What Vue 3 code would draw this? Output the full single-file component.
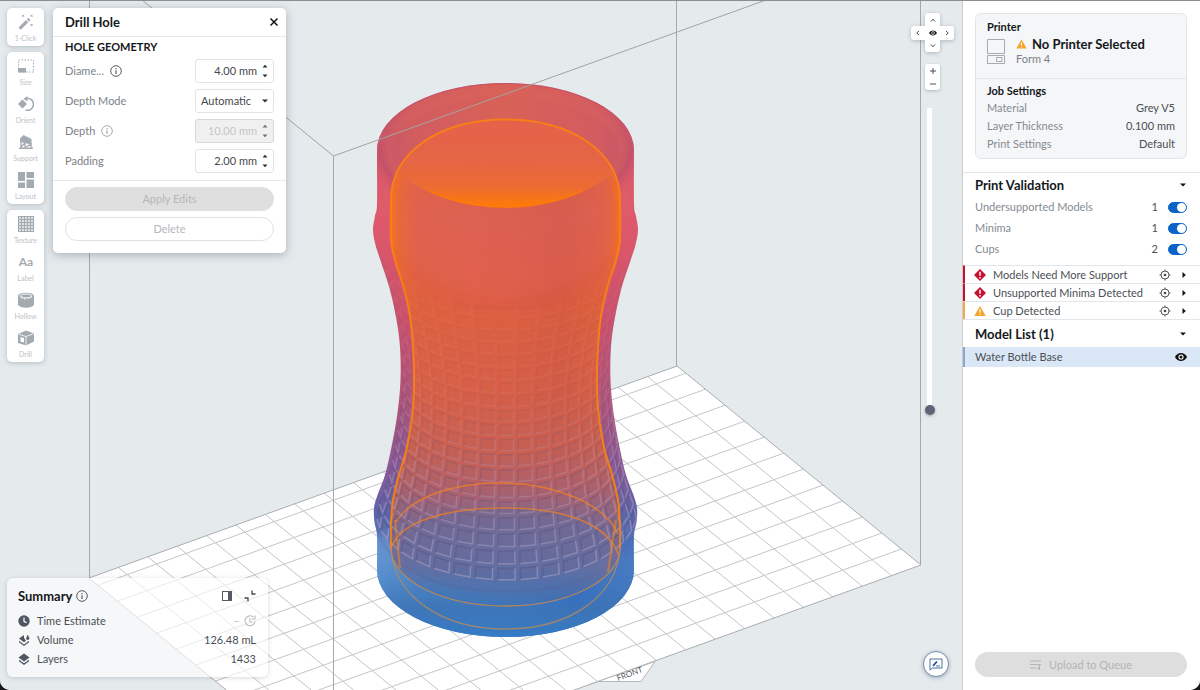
<script setup>
import { ref } from 'vue'

const toolGroups = [
  [{ icon: 'wand', label: '1-Click' }],
  [
    { icon: 'size', label: 'Size' },
    { icon: 'orient', label: 'Orient' },
    { icon: 'support', label: 'Support' },
    { icon: 'layout', label: 'Layout' },
  ],
  [
    { icon: 'texture', label: 'Texture' },
    { icon: 'label', label: 'Label' },
    { icon: 'hollow', label: 'Hollow' },
    { icon: 'drill', label: 'Drill' },
  ],
]
const gridStops = [0, 3, 6, 9, 12, 15]

const fields = ref([
  { id: 'diameter', label: 'Diame...', info: true, value: '4.00 mm' },
  { id: 'mode', label: 'Depth Mode', select: true },
  { id: 'depth', label: 'Depth', info: true, value: '10.00 mm', disabled: true },
  { id: 'padding', label: 'Padding', value: '2.00 mm' },
])
const job = [
  ['Material', 'Grey V5'],
  ['Layer Thickness', '0.100 mm'],
  ['Print Settings', 'Default'],
]
const checks = ref([
  { id: 'models', label: 'Undersupported Models', count: 1, on: true },
  { id: 'minima', label: 'Minima', count: 1, on: true },
  { id: 'cups', label: 'Cups', count: 2, on: true },
])
const alerts = [
  { text: 'Models Need More Support', level: 'error' },
  { text: 'Unsupported Minima Detected', level: 'error' },
  { text: 'Cup Detected', level: 'warn' },
]
const height = ref(0)

/* Build platform: an orthographic grid, 20 cells deep and 12 and a half wide. */
const floorLines = []
for (let i = 1; i < 20; i++) {
  const x = 89 + 29.4 * i
  const y = 578 - 10.6 * i
  floorLines.push({ x1: x, y1: y, x2: x + 244, y2: y + 199 })
}
for (let k = 1; k <= 12; k++) {
  const x = 921 - 19.6 * k
  const y = 565 - 15.98 * k
  floorLines.push({ x1: x, y1: y, x2: x - 588, y2: y + 212 })
}

/* Bottle profile as [height on the axis, radius]. */
const CX = 505.5
const TILT = 0.52
const outer = [
  [150, 128.5], [204, 128.5], [216, 130.5], [230, 132.5], [245, 130], [262, 124.5], [290, 115.5], [320, 109],
  [347, 105.5], [380, 105], [413, 108], [447, 114], [475, 120.5], [495, 128], [508, 131.5],
  [522, 131], [536, 128.5], [570, 128.5],
]
const inner = [
  [200, 114.5], [240, 114.5], [262, 110], [285, 102.5], [313, 96], [347, 92.5], [380, 91.5],
  [413, 93], [447, 98.5], [480, 108], [503, 113], [527, 114.5], [548, 114.5],
]
function radius(h) {
  for (let i = 1; i < outer.length; i++) {
    if (h <= outer[i][0]) {
      const [a, ra] = outer[i - 1]
      const [b, rb] = outer[i]
      return ra + ((rb - ra) * (h - a)) / (b - a)
    }
  }
  return 128.5
}
function curve(points) {
  let d = ''
  for (let i = 0; i < points.length - 1; i++) {
    const p0 = points[Math.max(i - 1, 0)]
    const p1 = points[i]
    const p2 = points[i + 1]
    const p3 = points[Math.min(i + 2, points.length - 1)]
    d += `C${p1[0] + (p2[0] - p0[0]) / 6},${p1[1] + (p2[1] - p0[1]) / 6} ${p2[0] - (p3[0] - p1[0]) / 6},${p2[1] - (p3[1] - p1[1]) / 6} ${p2[0]},${p2[1]}`
  }
  return d
}
const side = (profile, sign) => profile.map(([h, r]) => [CX + sign * r, h])
const outerPath =
  `M377,150A128.5,67 0 0 1 634,150` + curve(side(outer, 1)) +
  `A128.5,67 0 0 1 377,570` + curve(side(outer, -1).reverse()) + 'Z'
const innerTop = `M391,200C391,152 440,119.5 505.5,119.5S620,152 620,200` + curve(side(inner, 1))
const innerPath = innerTop + `A114.5,58 0 0 1 391,548` + curve(side(inner, -1).reverse()) + 'Z'
const innerEdge = innerTop + 'M391,548' + curve(side(inner, -1).reverse())

/* Embossed tiles wrapped round the front of the bottle. */
const tiles = []
const STEP = Math.PI / 18
const at = (h, a) => {
  const r = radius(h)
  return [CX + 1 + (r - 1) * Math.sin(a), h + r * TILT * Math.cos(a)]
}
const fmt = (p) => p.map((v) => v.toFixed(1)).join(',')
for (let row = 0; row < 19; row++) {
  const h = 238 + row * 14.5
  for (let col = -8; col <= 8; col++) {
    const a = col * STEP
    const q = [
      at(h + 2, a - STEP * 0.38), at(h + 2, a + STEP * 0.38),
      at(h + 12.5, a + STEP * 0.38), at(h + 12.5, a - STEP * 0.38),
    ]
    const strength = row < 9 ? 0.1 + row * 0.015 : 0.23 + (row - 8) * 0.055
    tiles.push({
      body: `M${q.map(fmt).join('L')}Z`,
      light: `M${fmt(q[1])}L${fmt(q[2])}L${fmt(q[3])}`,
      dark: `M${fmt(q[3])}L${fmt(q[0])}L${fmt(q[1])}`,
      o: Math.min(strength, 0.85),
    })
  }
}
</script>

<template>
  <div class="app">
    <main class="stage">
      <svg class="scene" viewBox="0 0 962 690" preserveAspectRatio="xMidYMid slice" aria-hidden="true">
        <defs>
          <linearGradient id="shell" gradientUnits="userSpaceOnUse" x1="0" y1="83" x2="0" y2="637">
            <stop offset="0" stop-color="#cf5a62" />
            <stop offset=".24" stop-color="#de596b" />
            <stop offset=".42" stop-color="#d0516a" />
            <stop offset=".58" stop-color="#b25379" />
            <stop offset=".7" stop-color="#8a5a98" />
            <stop offset=".78" stop-color="#5a66ac" />
            <stop offset=".86" stop-color="#5e8bcb" />
            <stop offset=".95" stop-color="#4189d0" />
            <stop offset="1" stop-color="#4a86cf" />
          </linearGradient>
          <linearGradient id="shade" gradientUnits="userSpaceOnUse" x1="377" y1="0" x2="634" y2="0">
            <stop offset="0" stop-color="#7fc0ee" stop-opacity=".3" />
            <stop offset=".3" stop-color="#3d6cb0" stop-opacity="0" />
            <stop offset=".75" stop-color="#1f4fa6" stop-opacity=".45" />
            <stop offset="1" stop-color="#2457b0" stop-opacity=".35" />
          </linearGradient>
          <linearGradient id="core" gradientUnits="userSpaceOnUse" x1="0" y1="119" x2="0" y2="606">
            <stop offset="0" stop-color="#e0604d" />
            <stop offset=".2" stop-color="#dc6053" />
            <stop offset=".36" stop-color="#e1603f" />
            <stop offset=".55" stop-color="#da5f47" />
            <stop offset=".68" stop-color="#cb6053" />
            <stop offset=".76" stop-color="#b3616a" />
            <stop offset=".83" stop-color="#81698e" />
            <stop offset=".92" stop-color="#6b6f9f" />
            <stop offset="1" stop-color="#3f6daa" stop-opacity=".5" />
          </linearGradient>
          <linearGradient id="coreSide" gradientUnits="userSpaceOnUse" x1="391" y1="0" x2="620" y2="0">
            <stop offset="0" stop-color="#ff7a10" stop-opacity=".5" />
            <stop offset=".12" stop-color="#f07030" stop-opacity=".15" />
            <stop offset=".4" stop-color="#ef7040" stop-opacity=".08" />
            <stop offset=".75" stop-color="#b84a35" stop-opacity=".12" />
            <stop offset=".93" stop-color="#f07020" stop-opacity=".15" />
            <stop offset="1" stop-color="#ff7a10" stop-opacity=".5" />
          </linearGradient>
          <linearGradient id="coreFade" gradientUnits="userSpaceOnUse" x1="0" y1="119" x2="0" y2="500">
            <stop offset=".7" stop-color="#fff" />
            <stop offset="1" stop-color="#000" />
          </linearGradient>
          <mask id="coreMask" maskUnits="userSpaceOnUse" x="370" y="100" width="280" height="420">
            <rect x="370" y="100" width="280" height="420" fill="url(#coreFade)" />
          </mask>
          <linearGradient id="lens" gradientUnits="userSpaceOnUse" x1="0" y1="119" x2="0" y2="208">
            <stop offset="0" stop-color="#e4624a" />
            <stop offset=".45" stop-color="#e56546" />
            <stop offset=".75" stop-color="#ec6b34" />
            <stop offset="1" stop-color="#ff7b04" />
          </linearGradient>
          <linearGradient id="rim" gradientUnits="userSpaceOnUse" x1="377" y1="0" x2="634" y2="0">
            <stop offset="0" stop-color="#c5546a" />
            <stop offset=".14" stop-color="#d25d60" />
            <stop offset=".5" stop-color="#d86157" />
            <stop offset=".85" stop-color="#d35c60" />
            <stop offset="1" stop-color="#c5546a" />
          </linearGradient>
          <linearGradient id="base" gradientUnits="userSpaceOnUse" x1="0" y1="530" x2="0" y2="637">
            <stop offset="0" stop-color="#4b83c8" stop-opacity="0" />
            <stop offset=".45" stop-color="#4679bc" stop-opacity=".35" />
            <stop offset=".72" stop-color="#3e73b3" stop-opacity=".85" />
            <stop offset="1" stop-color="#357cc6" />
          </linearGradient>
          <filter id="soft" x="-10%" y="-10%" width="120%" height="120%"><feGaussianBlur stdDeviation="3" /></filter>
          <filter id="haze" x="-10%" y="-10%" width="120%" height="120%"><feGaussianBlur stdDeviation="8" /></filter>
          <clipPath id="shellClip"><path :d="outerPath" /></clipPath>
          <clipPath id="coreClip"><path :d="innerPath" /></clipPath>
        </defs>

        <path d="M89,578L677,366L921,565L333,777Z" fill="#fff" />
        <line v-for="(l, i) in floorLines" :key="i" v-bind="l" stroke="#c3c5c7" />
        <path d="M89,578L677,366L921,565L333,777Z" fill="none" stroke="#a9adb0" />
        <path d="M588,685L655,661.500L641,681.500H597" fill="#fff" stroke="#b5b8bb" />
        <text x="618" y="681" transform="rotate(-20 618 681)" class="front">FRONT</text>
        <path d="M89.500,0V578M676.500,0V366M920.500,0V565" stroke="#a4a9ac" fill="none" />

        <path :d="outerPath" fill="url(#shell)" />
        <g clip-path="url(#shellClip)">
          <rect x="370" y="536" width="270" height="104" fill="url(#shade)" filter="url(#soft)" />
          <path d="M380,150A125.500,64 0 0 0 631,150V215H380Z" fill="#e0606a" opacity=".6" filter="url(#soft)" />
          <ellipse cx="505.500" cy="150" rx="127" ry="66" fill="url(#rim)" />
          <ellipse cx="505.500" cy="150" rx="117" ry="58" fill="none" stroke="#dd6860" stroke-width="6" opacity=".45" filter="url(#soft)" />
          <path d="M377,150A128.500,67 0 0 0 634,150" fill="none" stroke="#bb4c70" stroke-width="7" opacity=".5" filter="url(#soft)" />
          <path d="M377,150A128.500,67 0 0 1 634,150" fill="none" stroke="#b94a72" stroke-width="2" opacity=".5" />
        </g>

        <path :d="innerPath" fill="url(#core)" />
        <g clip-path="url(#coreClip)">
          <path d="M391,205C420,200 450,219 505,220S590,200 620,195V270Q505,345 391,270Z" fill="#dc6158" opacity=".55" filter="url(#haze)" />
          <path d="M391,255Q505,355 620,255" fill="none" stroke="#d85842" stroke-width="12" opacity=".4" filter="url(#soft)" />
          <rect x="390" y="119" width="232" height="381" fill="url(#coreSide)" mask="url(#coreMask)" />
          <path d="M391,520V200C391,152 440,119.500 505.500,119.500S620,152 620,200V520" fill="none" stroke="#ff7a08" stroke-width="6" opacity=".45" filter="url(#soft)" />
        </g>

        <g clip-path="url(#shellClip)">
          <path d="M374,538Q390,572 505,600T637,538V640H374Z" fill="url(#base)" filter="url(#soft)" />
          <ellipse cx="505" cy="551" rx="104" ry="44" fill="#4f70ad" opacity=".28" />
          <g v-for="(t, i) in tiles" :key="i" :opacity="t.o" fill="none">
            <path :d="t.body" fill="#6a6488" fill-opacity=".18" />
            <path :d="t.dark" stroke="#574f80" stroke-width="1.800" stroke-opacity=".5" />
            <path :d="t.light" stroke="#b09fbe" stroke-width="1.500" stroke-opacity=".7" />
          </g>
          <path d="M374,516Q385,590 505,591T637,516" fill="none" stroke="#65588e" stroke-width="2" opacity=".2" />
        </g>

        <path d="M391,200C391,152 440,119.500 505.500,119.500S620,152 620,200C616,188 613,178 612,173C586,196 545,207.500 505.500,207.500S425,196 399,173C396,180 393,188 391,200Z" fill="url(#lens)" />
        <path d="M430,191C454,202 480,207 505.500,207S557,202 581,191" fill="none" stroke="#ff7b08" stroke-width="2" opacity=".6" />
        <ellipse cx="505" cy="162" rx="12" ry="5" fill="none" stroke="#d9603f" opacity=".3" />
        <path d="M467,159v8M472,159v8M477,160v8M527,159v8M532,159v8" stroke="#d9603f" opacity=".25" />
        <path :d="innerEdge" fill="none" stroke="#fb8310" stroke-width="2" opacity=".9" />
        <g fill="none" stroke="#ef8222" stroke-width="1.500" opacity=".75">
          <path d="M396,522C412,496 455,483 500,483C555,483 605,504 618,534" />
          <path d="M392,546C402,520 450,508 505,508S608,522 619,556" />
        </g>
        <path d="M391,548A114.500,58 0 0 0 620,548" fill="none" stroke="#d08a45" stroke-width="1.300" opacity=".8" />
        <path d="M391,548C394,597 442,629 505.500,629S617,597 620,548" fill="none" stroke="#b98a5b" stroke-width="1.300" opacity=".8" />
        <path d="M395,520L400,568M616,520L608,572" stroke="#ff8a10" stroke-width="2" opacity=".5" />

        <path d="M142,0L333.500,156L766,0" fill="none" stroke="#a6a39f" />
        <path d="M333.500,156V690" stroke="#a4a9ac" />
      </svg>

      <nav class="toolbar" aria-label="Tools">
        <div v-for="(group, g) in toolGroups" :key="g" class="tool-group">
          <button v-for="tool in group" :key="tool.label" type="button" class="tool">
            <svg viewBox="0 0 16 16" class="tool-icon" fill="currentColor">
              <g v-if="tool.icon === 'wand'">
                <path d="M.5,13.500 8,6l2.300,2.300L2.800,15.800Z" /><path d="M8.800,5.200 10.200,3.800l2.300,2.300L11.100,7.500Z" />
                <path d="M4 .8l2 2m0-2-2 2M12.500.8l2 2m0-2-2 2M12.500 10l2 2m0-2-2 2" stroke="currentColor" fill="none" />
              </g>
              <g v-else-if="tool.icon === 'size'">
                <rect x=".5" y="2" width="15" height="12" fill="none" stroke="currentColor" stroke-dasharray="1.500 1.500" />
                <rect y="10" width="8" height="4.500" />
              </g>
              <g v-else-if="tool.icon === 'orient'">
                <path d="M0,8 4.500,3.500 9,8 4.500,12.500Z" />
                <path d="M8,2.500A6,6 0 1 1 7.500,14" fill="none" stroke="currentColor" stroke-width="1.500" /><path d="M9.500 0v5.500L5.500 2.700Z" />
              </g>
              <g v-else-if="tool.icon === 'support'">
                <path d="M2,4.500 5.500,1 13.500,5V10.500L2,8Z" />
                <path d="M3,7V14M7,9V14M13,9V14M3,13l4-4M8,13l5-3" stroke="currentColor" stroke-width="1.300" /><path d="M1,13.500h14V15H1Z" />
              </g>
              <path v-else-if="tool.icon === 'layout'" d="M0,0h7v9H0ZM8.500,0H16v6H8.500ZM0,10.500h7V16H0ZM8.500,7.500H16V16H8.500Z" />
              <g v-else-if="tool.icon === 'texture'" stroke="currentColor" stroke-width="1.300">
                <path v-for="s in gridStops" :key="s" :d="`M${s + .5},0V16M0,${s + .5}H16`" />
              </g>
              <text v-else-if="tool.icon === 'label'" x="8" y="12" text-anchor="middle" class="aa">Aa</text>
              <g v-else-if="tool.icon === 'hollow'">
                <path d="M0,4C0,-.5 16,-.5 16,4V12C16,17 0,17 0,12Z" />
                <ellipse cx="8" cy="4" rx="6" ry="2" fill="none" stroke="#fff" stroke-width=".9" />
                <path d="M4 4v2.500M7 5v3M10.500 5v2M13 4v2" stroke="#fff" stroke-width=".7" />
              </g>
              <g v-else>
                <path d="M0,4 8,0.500 16,3.500V11.500L8,15.500 0,13Z" />
                <path d="M.5,4.200 8,6.500 15.500,3.800M8,6.500V15" stroke="#fff" fill="none" stroke-width=".8" />
                <path d="M2.500,7 6,8V12.500L2.500,11.500Z" fill="#fff" />
              </g>
            </svg>
            <span>{{ tool.label }}</span>
          </button>
        </div>
      </nav>

      <section class="drill">
        <header class="drill-head">
          <h2>Drill Hole</h2>
          <button type="button" class="plain" aria-label="Close">
            <svg viewBox="0 0 10 10" width="10" height="10"><path d="M1.500,1.500l7,7m0-7-7,7" stroke="#111" stroke-width="1.500" /></svg>
          </button>
        </header>
        <div class="drill-body">
          <h3>HOLE GEOMETRY</h3>
          <div v-for="f in fields" :key="f.id" class="field">
            <label :for="f.id">{{ f.label }}</label>
            <svg v-if="f.info" class="info" :class="{ dim: f.disabled }" viewBox="0 0 12 12"><circle cx="6" cy="6" r="5.300" fill="none" stroke="currentColor" /><path d="M6,5.200V9M6,3v1.200" stroke="currentColor" stroke-width="1.200" /></svg>
            <div class="control" :class="{ off: f.disabled }">
              <template v-if="f.select">
                <select :id="f.id"><option>Automatic</option></select>
                <svg class="caret" viewBox="0 0 6 4"><path d="M0,.5h6L3,3.500Z" /></svg>
              </template>
              <template v-else>
                <input :id="f.id" v-model="f.value" type="text" :disabled="f.disabled" />
                <span class="spin">
                  <button type="button" aria-label="Increase" :disabled="f.disabled"><svg viewBox="0 0 6 4"><path d="M.5,3.500h5L3,.8Z" /></svg></button>
                  <button type="button" aria-label="Decrease" :disabled="f.disabled"><svg viewBox="0 0 6 4"><path d="M.5,.5h5L3,3.200Z" /></svg></button>
                </span>
              </template>
            </div>
          </div>
        </div>
        <footer class="drill-foot">
          <button type="button" class="pill filled" disabled>Apply Edits</button>
          <button type="button" class="pill" disabled>Delete</button>
        </footer>
      </section>

      <section class="summary">
        <header>
          <h2>Summary</h2>
          <svg class="info" viewBox="0 0 12 12"><circle cx="6" cy="6" r="5.300" fill="none" stroke="currentColor" /><path d="M6,5.200V9M6,3v1.200" stroke="currentColor" stroke-width="1.200" /></svg>
          <button type="button" class="plain push" aria-label="Dock panel">
            <svg viewBox="0 0 10 10" width="10" height="10"><rect x=".5" y=".5" width="9" height="9" fill="none" stroke="#555b66" /><path d="M6,0h4v10H6Z" fill="#555b66" /></svg>
          </button>
          <button type="button" class="plain" aria-label="Collapse panel">
            <svg viewBox="0 0 12 12" width="12" height="12"><path d="M8,.5V4H11.500M.5,8H4V11.500" fill="none" stroke="#444a52" stroke-width="1.300" /></svg>
          </button>
        </header>
        <dl>
          <div>
            <dt><svg viewBox="0 0 12 12"><circle cx="6" cy="6" r="5.700" fill="#4f5660" /><path d="M6,2.500V6.300L8.500,7.800" fill="none" stroke="#fff" stroke-width="1.200" /></svg>Time Estimate</dt>
            <dd class="pending">–<svg viewBox="0 0 12 12"><path d="M9.500,2.200A5,5 0 1 0 11,6.500M6,3.200V6.500L8.200,7.500M11,.5V4H7.500" fill="none" stroke="#b9bdc0" stroke-width="1.100" /></svg></dd>
          </div>
          <div>
            <dt><svg viewBox="0 0 12 12"><path d="M6,1 1,4.500l5,3.700L8,6.700 6,4ZM8,4.500 9.800,.5 11.500,4.500A1.800,1.800 0 0 1 8,4.500ZM1,6.800 6,10.500l5-3.700v1.500L6,12 1,8.300Z" fill="#4f5660" /></svg>Volume</dt>
            <dd>126.48 mL</dd>
          </div>
          <div>
            <dt><svg viewBox="0 0 12 12"><path d="M6,.5 11.500,4.500 6,8.500 .5,4.500ZM1,6.800 6,10.300l5-3.500v1.500L6,12 1,8.300Z" fill="#4f5660" /></svg>Layers</dt>
            <dd>1433</dd>
          </div>
        </dl>
      </section>

      <div class="view-controls">
        <div class="cross">
          <button type="button" class="up" aria-label="Tilt up"><svg viewBox="0 0 6 6"><path d="M1,4.500 3,2.200 5,4.500" /></svg></button>
          <button type="button" class="left" aria-label="Rotate left"><svg viewBox="0 0 6 6"><path d="M4,1 1.800,3 4,5" /></svg></button>
          <button type="button" class="mid" aria-label="View"><svg viewBox="0 0 8 6" class="eye"><path d="M0,3C2,-.3 6,-.3 8,3C6,6.300 2,6.300 0,3Z" /><circle cx="4" cy="3" r="1.700" fill="#fff" stroke="none" /><circle cx="4" cy="3" r=".9" /></svg></button>
          <button type="button" class="right" aria-label="Rotate right"><svg viewBox="0 0 6 6"><path d="M2,1 4.200,3 2,5" /></svg></button>
          <button type="button" class="down" aria-label="Tilt down"><svg viewBox="0 0 6 6"><path d="M1,1.500 3,3.800 5,1.500" /></svg></button>
        </div>
        <div class="zoom">
          <button type="button" aria-label="Zoom in"><svg viewBox="0 0 6 6"><path d="M3,0V6M0,3H6" /></svg></button>
          <button type="button" aria-label="Zoom out"><svg viewBox="0 0 6 6"><path d="M0,3H6" /></svg></button>
        </div>
        <input v-model="height" class="slice" type="range" min="0" max="100" aria-label="Slice height" />
      </div>

      <button type="button" class="feedback" aria-label="Feedback">
        <svg viewBox="0 0 14 13" width="14" height="13"><path d="M1,12.200V1H13V10H3.200Z" fill="none" stroke="#4a7099" /><path d="M4,7.800 8,3.500" stroke="#1d4f9c" stroke-width="1.700" /><path d="M7,8h4" stroke="#4a7099" /></svg>
      </button>
    </main>

    <aside class="side">
      <section class="card">
        <div class="printer">
          <h3>Printer</h3>
          <div class="printer-row">
            <svg viewBox="0 0 18 26" width="18" height="26"><path d="M.5,.5h17v14H.5ZM.5,16.500h17v8H.5ZM9.500,18.500h5.500v4H9.500Z" fill="none" stroke="#a5abb1" /></svg>
            <div>
              <p class="printer-name">
                <svg viewBox="0 0 12 11" width="11" height="10"><path d="M6,.5 11.700,10.500H.3Z" fill="#f5a32c" /><path d="M6,3.800V7.200M6,8.200v1.200" stroke="#fff" stroke-width="1.200" /></svg>
                No Printer Selected
              </p>
              <p class="model">Form 4</p>
            </div>
          </div>
        </div>
        <div class="job">
          <h3>Job Settings</h3>
          <dl>
            <div v-for="[k, v] in job" :key="k"><dt>{{ k }}</dt><dd>{{ v }}</dd></div>
          </dl>
        </div>
      </section>

      <section class="validation">
        <header class="heading">
          <h2>Print Validation</h2>
          <button type="button" class="plain" aria-label="Collapse Print Validation"><svg viewBox="0 0 6 4" class="tri"><path d="M0,.5h6L3,3.500Z" /></svg></button>
        </header>
        <div v-for="c in checks" :key="c.id" class="check">
          <label :for="c.id">{{ c.label }}</label>
          <span class="count">{{ c.count }}</span>
          <input :id="c.id" v-model="c.on" type="checkbox" role="switch" class="switch" />
        </div>
      </section>

      <ul class="alerts">
        <li v-for="a in alerts" :key="a.text" :class="a.level">
          <svg v-if="a.level === 'error'" viewBox="0 0 12 12" width="12" height="12"><path d="M6,0 12,6 6,12 0,6Z" fill="#c8102e" /><path d="M6,2.800V6.700M6,8v1.400" stroke="#fff" stroke-width="1.500" /></svg>
          <svg v-else viewBox="0 0 12 12" width="12" height="12"><path d="M6,1 11.700,11H.3Z" fill="#f5a32c" /><path d="M6,4.300V7.700M6,8.700v1.200" stroke="#fff" stroke-width="1.200" /></svg>
          <span>{{ a.text }}</span>
          <button type="button" class="plain" aria-label="Locate"><svg viewBox="0 0 12 12" width="12" height="12"><circle cx="6" cy="6" r="4" fill="none" stroke="#555" /><circle cx="6" cy="6" r="1.300" fill="#444" /><path d="M6,.5V2M6,10v1.500M.5,6H2M10,6h1.500" stroke="#555" /></svg></button>
          <button type="button" class="plain" aria-label="Expand"><svg viewBox="0 0 4 6" class="tri-right"><path d="M.5,0V6L3.800,3Z" /></svg></button>
        </li>
      </ul>

      <section class="models">
        <header class="heading">
          <h2>Model List (1)</h2>
          <button type="button" class="plain" aria-label="Collapse Model List"><svg viewBox="0 0 6 4" class="tri"><path d="M0,.5h6L3,3.500Z" /></svg></button>
        </header>
        <div class="model-row">
          <span>Water Bottle Base</span>
          <button type="button" class="plain" aria-label="Toggle visibility"><svg viewBox="0 0 12 8" width="12" height="8"><path d="M0,4C2.500,-1.200 9.500,-1.200 12,4C9.500,9.200 2.500,9.200 0,4Z" fill="#111" /><circle cx="6" cy="4" r="2.600" fill="#fff" /><circle cx="6" cy="4" r="1.500" fill="#111" /></svg></button>
        </div>
      </section>

      <footer class="side-foot">
        <button type="button" class="upload" disabled>
          <svg viewBox="0 0 12 10" width="12" height="10"><path d="M0,1H11M0,4.500H11M0,8H6M9.500,4.500V9.500M9.500,9.500l-2-2" fill="none" stroke="#b3b3b3" stroke-width="1.200" /></svg>
          Upload to Queue
        </button>
      </footer>
    </aside>
  </div>
</template>

<style>
body {
  margin: 0;
  background: #17181a;
}
</style>

<style scoped>
.app {
  display: flex;
  height: 100vh;
  box-sizing: border-box;
  border-top: 1px solid #8b8e91;
  border-radius: 0 0 10px 10px;
  overflow: hidden;
  background: #fff;
  font-family: Lato, "Open Sans", sans-serif;
  font-size: 11px;
  line-height: 16px;
  color: #4a4f55;
}
.app *, .app *::before { box-sizing: border-box; }
h2, h3, p, dl, dd, ul { margin: 0; padding: 0; }
h2 { font-size: 13px; font-weight: 700; color: #15181b; }
h3 { font-size: 11px; font-weight: 700; color: #15181b; }
button { font: inherit; color: inherit; padding: 0; border: 0; background: none; }
svg { display: block; flex: none; }
.plain { display: flex; align-items: center; justify-content: center; }

.stage { position: relative; flex: 1; min-width: 0; background: #e5eaed; overflow: hidden; }
.scene { position: absolute; inset: -1px 0 0; width: 100%; height: calc(100% + 1px); }
.front { font-size: 8px; fill: #55595c; }

.toolbar { position: absolute; left: 7px; top: 7px; display: flex; flex-direction: column; gap: 6px; width: 37px; }
.tool-group { background: #fff; border-radius: 5px; box-shadow: 0 1px 5px rgba(70, 85, 95, .3); }
.tool { display: flex; flex-direction: column; align-items: center; gap: 4px; width: 100%; height: 38px; padding-top: 6px; font-size: 7px; line-height: 9px; color: #bdc2c6; }
.tool-icon { width: 16px; height: 16px; color: #a3aab0; }
.aa { font-size: 12px; font-weight: 700; }

.drill { position: absolute; left: 53px; top: 7px; width: 233px; background: #fff; border-radius: 5px; box-shadow: 0 2px 10px rgba(60, 75, 85, .35); }
.drill-head { display: flex; align-items: center; justify-content: space-between; height: 29px; padding: 0 7px 0 12px; border-bottom: 1px solid #e6e8ea; }
.drill-body { padding: 0 12px 4px; border-bottom: 1px solid #e6e8ea; }
.drill-body h3 { line-height: 19px; }
.field { display: flex; align-items: center; gap: 6px; height: 30px; color: #7c8288; }
.info { width: 12px; height: 12px; color: #555b61; }
.info.dim { color: #a5aaae; }
.control { display: flex; align-items: center; width: 79px; height: 24px; margin-left: auto; padding: 0 5px; border: 1px solid #e1e3e5; border-radius: 3px; background: #fff; }
.control input, .control select { flex: 1; min-width: 0; width: 100%; padding: 0; border: 0; background: none; font: inherit; color: #43484d; appearance: none; outline: 0; }
.control input { text-align: right; padding-right: 5px; }
.control.off { background: #f0f0f0; border-color: #d8d8d8; }
.control.off input { color: #c5c7c9; }
.caret, .spin svg { width: 6px; height: 4px; fill: #2c2f33; }
.off .spin svg { fill: #6d7175; }
.spin { display: flex; flex-direction: column; gap: 6px; }
.spin button { display: block; height: 4px; }
.drill-foot { display: flex; flex-direction: column; gap: 6px; padding: 6px 12px 12px; }
.pill { height: 24px; border: 1px solid #e0e1e2; border-radius: 12px; color: #b5b7b9; }
.filled { background: #dfdfdf; border-color: #dfdfdf; }

.summary { position: absolute; left: 7px; bottom: 13px; width: 261px; padding: 9px 12px 9px 11px; border-radius: 6px; background: rgba(255, 255, 255, .62); box-shadow: 0 1px 5px rgba(70, 85, 95, .22); }
.summary header { display: flex; align-items: center; gap: 4px; height: 17px; margin-bottom: 7px; }
.push { margin-left: auto; margin-right: 8px; }
.summary dl div { display: flex; justify-content: space-between; height: 19px; align-items: center; }
.summary dt, .summary dd { display: flex; align-items: center; gap: 7px; }
.summary dt svg, .summary dd svg { width: 12px; height: 12px; }
.summary .pending { color: #b9bdc0; gap: 4px; }

.view-controls { position: absolute; top: 12px; right: 8px; display: flex; flex-direction: column; align-items: center; width: 43px; }
.view-controls svg { width: 6px; height: 6px; fill: none; stroke: #4a4e52; }
.view-controls .eye { width: 8px; fill: #111; stroke: none; }
.view-controls button { display: flex; align-items: center; justify-content: center; background: #fff; }
.cross { display: grid; grid-template: 13px 14px 12px / 14px 15px 14px; filter: drop-shadow(0 1px 2px rgba(70, 85, 95, .35)); }
.up { grid-area: 1 / 2; border-radius: 3px 3px 0 0; }
.left { grid-area: 2 / 1; border-radius: 3px 0 0 3px; }
.mid { grid-area: 2 / 2; }
.right { grid-area: 2 / 3; border-radius: 0 3px 3px 0; }
.down { grid-area: 3 / 2; border-radius: 0 0 3px 3px; }
.zoom { display: grid; width: 15px; margin-top: 12px; border-radius: 3px; overflow: hidden; box-shadow: 0 1px 3px rgba(70, 85, 95, .35); }
.zoom button { height: 13px; }
.slice { writing-mode: vertical-lr; direction: rtl; appearance: none; width: 10px; height: 307px; margin: 18px 6px 0 0; background: linear-gradient(#fff, #fff) center / 5px 100% no-repeat; }
.slice::-webkit-slider-thumb { appearance: none; width: 10px; height: 10px; border-radius: 50%; background: #5f6478; box-shadow: 0 1px 3px rgba(0, 0, 0, .3); }
.feedback { position: absolute; right: 13px; bottom: 13px; display: flex; align-items: center; justify-content: center; width: 26px; height: 26px; border: 1px solid #6f8fae; border-radius: 50%; background: #fff; box-shadow: 0 1px 4px rgba(40, 60, 90, .35); }

.side { display: flex; flex-direction: column; flex: 0 0 238px; border-left: 1px solid #c9cdd0; background: #fff; }
.card { margin: 12px 13px 13px 12px; border: 1px solid #e2e6ea; border-radius: 6px; background: #f4f6f8; }
.printer { padding: 5px 11px 11px; border-bottom: 1px solid #e2e6ea; }
.printer-row { display: flex; gap: 11px; padding-top: 2px; }
.printer-row > svg { margin-top: 2px; }
.printer-name { display: flex; align-items: center; gap: 5px; font-size: 13px; line-height: 14px; font-weight: 700; color: #15181b; }
.model { color: #7c8288; }
.job { padding: 4px 11px 5px; }
.job dl div { display: flex; justify-content: space-between; line-height: 18px; }
.job dt { color: #858b91; }
.validation { border-top: 1px solid #e2e6ea; padding-bottom: 5px; }
.heading { display: flex; align-items: center; justify-content: space-between; height: 24px; padding: 0 13px 0 12px; }
.models .heading { height: 27px; }
.tri { width: 6px; height: 4px; margin-right: 1px; fill: #111; }
.check { display: flex; align-items: center; height: 20px; padding: 0 13px 0 12px; color: #858b91; margin-bottom: 1px; }
.count { margin-left: auto; margin-right: 10px; color: #4a4f55; }
.switch { appearance: none; position: relative; width: 19px; height: 11px; margin: 0; border-radius: 6px; border: 1px solid #0b63c8; background: #0b63c8; }
.switch::before { content: ""; position: absolute; right: 0; top: 0; width: 9px; height: 9px; border-radius: 50%; background: #fff; }
.switch:not(:checked) { background: #b9bec3; border-color: #b9bec3; }
.switch:not(:checked)::before { right: auto; left: 0; }
.alerts { list-style: none; border-bottom: 1px solid #e2e6ea; }
.alerts li { display: flex; align-items: center; height: 18px; padding: 0 14px 0 9px; border-top: 1px solid #e2e6ea; border-left: 2px solid #c8102e; }
.alerts li.warn { border-left-color: #f5a94a; }
.alerts span { flex: 1; margin-left: 7px; }
.tri-right { width: 4px; height: 6px; margin-left: 11px; fill: #111; }
.model-row { display: flex; align-items: center; justify-content: space-between; height: 20px; padding: 0 13px 0 10px; border-left: 2px solid #8ca6cc; background: #dae7f6; }
.side-foot { margin-top: auto; padding: 0 13px 13px 12px; }
.upload { display: flex; align-items: center; justify-content: center; gap: 7px; width: 100%; height: 25px; border-radius: 13px; background: #dedede; color: #b3b3b3; }
</style>
